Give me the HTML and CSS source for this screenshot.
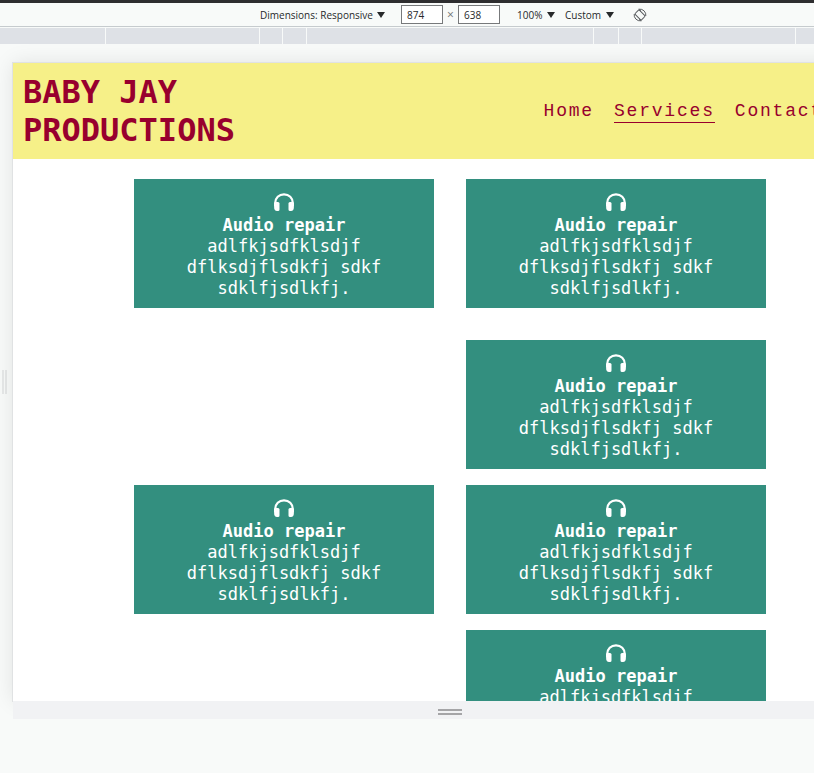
FILE: index.html
```html
<!DOCTYPE html>
<html lang="en">
<head>
<meta charset="utf-8">
<title>Baby Jay Productions</title>
<link rel="stylesheet" href="styles.css">
</head>
<body>
<svg class="defs" aria-hidden="true">
  <symbol id="headphones" viewBox="0 0 22 20">
    <path d="M2.200 14V11C2.200 6 6 2.300 11 2.300S19.800 6 19.800 11V14" fill="none" stroke="#fff" stroke-width="2.200"/>
    <path d="M1.100 11Q1.500 10 3.500 10H5Q6.500 10 6.500 11.500V17.500Q6.500 19 5 19H4Q1.100 19 1.100 15Z" fill="#fff"/>
    <path d="M20.900 11Q20.500 10 18.500 10H17Q15.500 10 15.500 11.500V17.500Q15.500 19 17 19H18Q20.900 19 20.900 15Z" fill="#fff"/>
  </symbol>
</svg>
<div class="toolbar">
  <div class="drop drop-device"><select aria-label="Device"><option>Dimensions: Responsive</option></select><span class="arrow"></span></div>
  <input class="size" type="text" value="874" aria-label="Width">
  <span class="times">×</span>
  <input class="size" type="text" value="638" aria-label="Height">
  <div class="drop drop-zoom"><select aria-label="Zoom"><option>100%</option></select><span class="arrow"></span></div>
  <div class="drop drop-throttle"><select aria-label="Throttling"><option>Custom</option></select><span class="arrow"></span></div>
  <button class="rotate" type="button" aria-label="Rotate">
    <svg width="14" height="14" viewBox="0 0 14 14" fill="none" stroke="#5a5d60">
      <rect x="4" y="2.500" width="6" height="9" rx="1" transform="rotate(-45 7 7)"/>
      <path d="M6 1.200A6 6 0 0 1 12.800 8M8 12.800A6 6 0 0 1 1.200 6M5.500 1.200l2.500 2M8.500 12.800l-2.500-2"/>
    </svg>
  </button>
</div>
<div class="ruler"><i></i><i></i><i></i><i></i><i></i><i></i><i></i><i></i><i></i></div>
<div class="stage">
  <div class="side"><span class="grip-side"></span></div>
  <div class="device">
    <div class="screen">
      <header class="site-header">
        <h1>BABY JAY PRODUCTIONS</h1>
        <nav>
          <a href="#home">Home</a>
          <a href="#services" class="current">Services</a>
          <a href="#contact">Contact</a>
        </nav>
      </header>
      <main class="services">
        <article class="card first"><svg><use href="#headphones"/></svg><h2>Audio repair</h2><p>adlfkjsdfklsdjf dflksdjflsdkfj sdkf sdklfjsdlkfj.</p></article>
        <article class="card first"><svg><use href="#headphones"/></svg><h2>Audio repair</h2><p>adlfkjsdfklsdjf dflksdjflsdkfj sdkf sdklfjsdlkfj.</p></article>
        <article class="card right"><svg><use href="#headphones"/></svg><h2>Audio repair</h2><p>adlfkjsdfklsdjf dflksdjflsdkfj sdkf sdklfjsdlkfj.</p></article>
        <article class="card"><svg><use href="#headphones"/></svg><h2>Audio repair</h2><p>adlfkjsdfklsdjf dflksdjflsdkfj sdkf sdklfjsdlkfj.</p></article>
        <article class="card"><svg><use href="#headphones"/></svg><h2>Audio repair</h2><p>adlfkjsdfklsdjf dflksdjflsdkfj sdkf sdklfjsdlkfj.</p></article>
        <article class="card right"><svg><use href="#headphones"/></svg><h2>Audio repair</h2><p>adlfkjsdfklsdjf dflksdjflsdkfj sdkf sdklfjsdlkfj.</p></article>
      </main>
    </div>
    <div class="resizer"><span class="grip"></span></div>
  </div>
</div>
</body>
</html>
```
FILE: styles.css
```css
* { box-sizing: border-box; }

body {
  margin: 0;
  min-height: 100vh;
  overflow: hidden;
  background: #f8faf9;
  border-top: 3px solid #2e2e30;
  font-family: "Open Sans", sans-serif;
}

.defs { display: none; }

/* Device toolbar */
.toolbar {
  display: flex;
  align-items: center;
  height: 24px;
  padding-left: 260px;
  border-bottom: 1px solid #c6cbce;
  font-size: 10px;
  color: #27292b;
}

.drop { display: flex; align-items: center; gap: 4px; }
.drop-device { width: 141px; }
.drop-zoom { width: 48px; margin-left: 17px; }
.drop-throttle { width: 68px; }

select {
  appearance: none;
  border: 0;
  padding: 0;
  background: none;
  font: inherit;
  color: inherit;
}

.arrow {
  flex: none;
  border: solid transparent;
  border-width: 6px 4px 0;
  border-top-color: #27292b;
}

.size {
  width: 42px;
  height: 19px;
  padding: 0 5px;
  border: 1px solid #77797b;
  background: #fff;
  font: inherit;
  color: inherit;
}

.times { width: 15px; font-size: 12px; text-align: center; color: #6e7174; }

.rotate {
  display: flex;
  padding: 0;
  border: 0;
  background: none;
}

/* Media query ruler */
.ruler {
  display: grid;
  grid-template-columns: 105px 153px 22px 23px 286px 24px 22px 153px 1fr;
  gap: 1px;
  height: 16px;
  margin-top: 1px;
}

.ruler i { background: #dee1e6; }

/* Emulated device */
.stage {
  display: grid;
  grid-template-columns: 13px 874px;
  padding-top: 19px;
  overflow: hidden;
}

.side {
  display: flex;
  align-items: center;
  padding: 0 0 18px 2px;
}

.grip-side {
  width: 5px;
  height: 24px;
  border: solid #e6e8e8;
  border-width: 0 2px;
}

.screen {
  height: 638px;
  overflow: hidden;
  background: #fff;
  box-shadow: 0 0 0 1px #e0e2e3, 0 0 20px rgba(0, 0, 0, 0.1);
}

.resizer {
  position: relative;
  display: flex;
  align-items: center;
  justify-content: center;
  height: 18px;
  padding-top: 3px;
  background: #f1f2f4;
}

.grip {
  width: 24px;
  height: 6px;
  border: solid #a5a5a7;
  border-width: 2px 0;
}

/* Site */
.site-header {
  display: flex;
  align-items: center;
  justify-content: space-between;
  padding: 10px 64px 10px 10px;
  background: #f6f088;
  color: #98002e;
}

h1 {
  width: 240px;
  margin: 0;
  font: bold 32px/38px "DejaVu Sans Mono", monospace;
}

nav { display: flex; gap: 20px; }

nav a {
  padding-top: 1px;
  border-bottom: 1px solid transparent;
  font: 18px/21px "Liberation Mono", monospace;
  letter-spacing: 0.1em;
  color: #98002e;
  text-decoration: none;
}

nav .current { border-color: #98002e; }

.services {
  display: grid;
  grid-template-columns: 300px 300px;
  justify-content: center;
  gap: 16px 32px;
  padding: 20px;
}

.card {
  padding: 13px 50px 9px;
  background: #338f7f;
  color: #fff;
  font: 17px/21px "DejaVu Sans Mono", monospace;
  text-align: center;
}

.first { margin-bottom: 16px; }
.right { grid-column: 2; }

.card svg { display: block; width: 22px; height: 20px; margin: 0 auto 3px; }
.card h2 { margin: 0; font: inherit; font-weight: bold; }
.card p { margin: 0; }
```
